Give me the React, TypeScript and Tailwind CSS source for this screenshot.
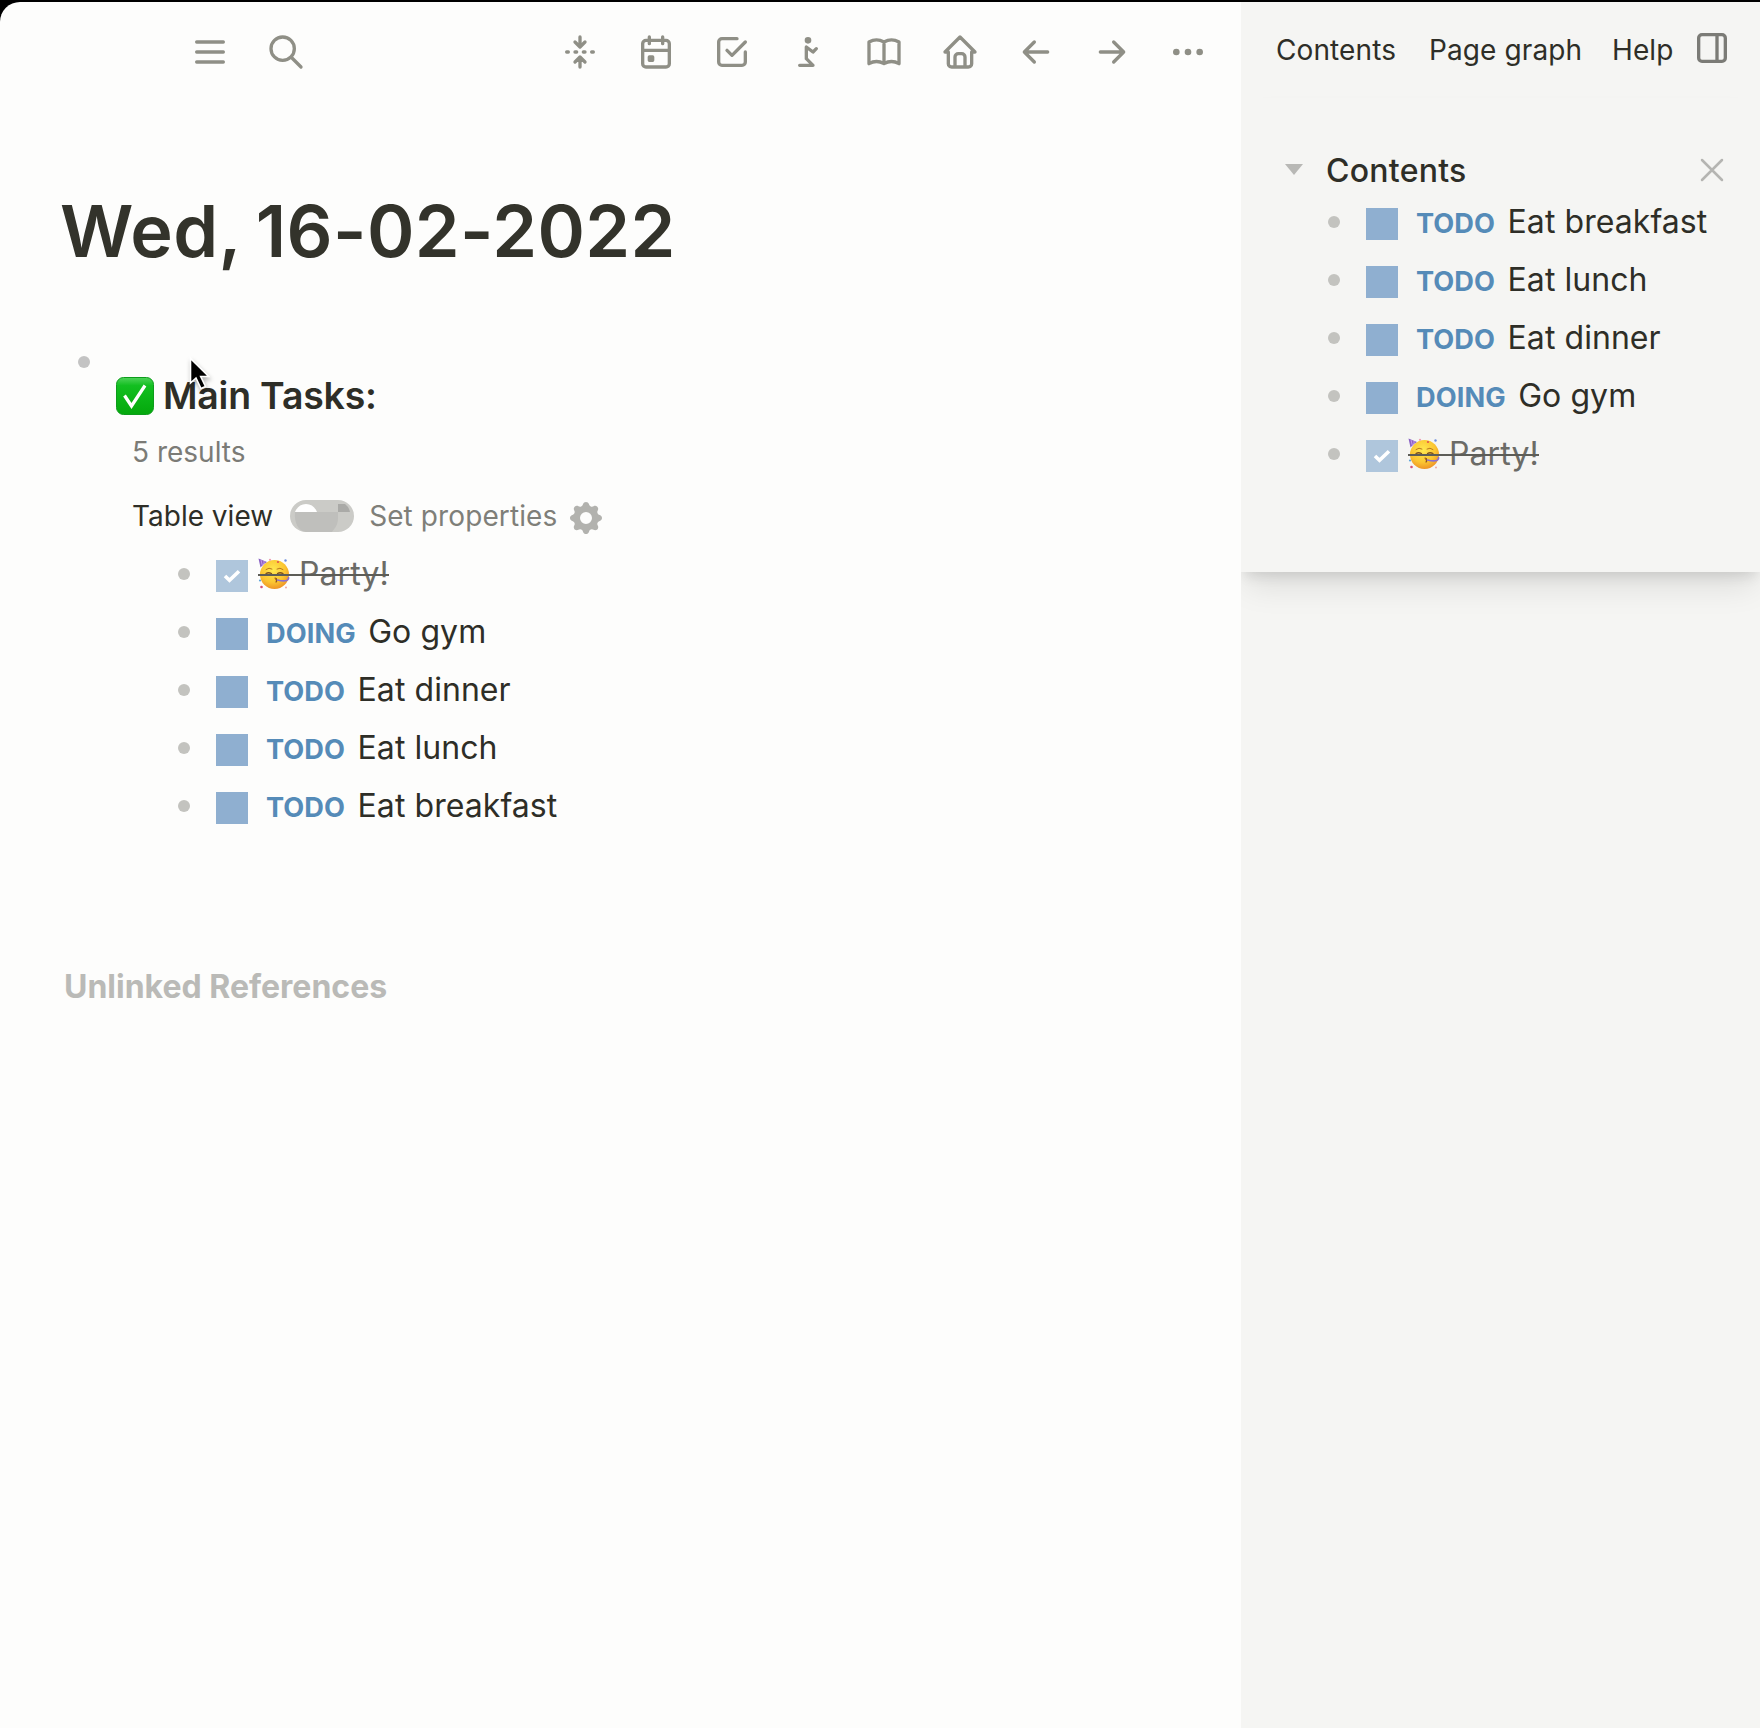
import type { ReactNode } from "react";

function Icon({ children, className = "" }: { children: ReactNode; className?: string }) {
  return (
    <svg viewBox="0 0 24 24" fill="none" stroke="currentColor" strokeWidth="2" strokeLinecap="round" strokeLinejoin="round" className={`size-10 shrink-0 ${className}`}>
      {children}
    </svg>
  );
}

const toolbar: string[] = [
  "M12 3v6l3-3M9 6l3 3M12 21v-6l3 3M9 18l3-3M4 12h1M9 12h1M14 12h1M19 12h1",
  "M6 5h12a2 2 0 0 1 2 2v12a2 2 0 0 1-2 2H6a2 2 0 0 1-2-2V7a2 2 0 0 1 2-2zM16 3v4M8 3v4M4 11h16M8 15h2v2H8z",
  "M9 11l3 3l8-8M20 12v6a2 2 0 0 1-2 2H6a2 2 0 0 1-2-2V6a2 2 0 0 1 2-2h9",
  "M11 5a1 1 0 1 0 2 0a1 1 0 1 0-2 0M7 20h8l-4-4V9l4 3l2-2",
  "M3 19a9 9 0 0 1 9 0a9 9 0 0 1 9 0M3 6a9 9 0 0 1 9 0a9 9 0 0 1 9 0M3 6v13M12 6v13M21 6v13",
  "M5 12H3l9-9l9 9h-2M5 12v7a2 2 0 0 0 2 2h10a2 2 0 0 0 2-2v-7M9 21v-6a2 2 0 0 1 2-2h2a2 2 0 0 1 2 2v6",
  "M5 12h14M5 12l6 6M5 12l6-6",
  "M5 12h14M13 18l6-6M13 6l6 6",
  "M4 12a1 1 0 1 0 2 0a1 1 0 1 0-2 0M11 12a1 1 0 1 0 2 0a1 1 0 1 0-2 0M18 12a1 1 0 1 0 2 0a1 1 0 1 0-2 0",
];

function PartyFace() {
  return (
    <svg viewBox="0 0 32 32" className="size-8 shrink-0">
      <defs>
        <radialGradient id="face" cx="0.45" cy="0.35" r="0.65">
          <stop offset="0" stopColor="#ffe950" />
          <stop offset="0.65" stopColor="#fbc531" />
          <stop offset="1" stopColor="#ee9526" />
        </radialGradient>
      </defs>
      <circle cx="16.500" cy="16.500" r="14.500" fill="url(#face)" />
      <path d="M0.500 0.500L9 4Q5 6 2.500 9.500z" fill="#8a62c4" />
      <path d="M3 2l1.500 6M6 3v3" stroke="#c69bea" strokeWidth="1" />
      <path d="M8 11.500q3-2.500 6-0.500M19 11q3-2 6 0.500" stroke="#b8761f" strokeWidth="1" fill="none" strokeLinecap="round" />
      <path d="M8 15.500q2.500-1.500 5.500 0M19.500 15.500q2.500-1.500 5.500 0" stroke="#7a4f1e" strokeWidth="1.300" fill="none" strokeLinecap="round" />
      <path d="M17 20q2.500 0.500 1 1.800q1.500 1 0 2.200" stroke="#8a4a18" strokeWidth="1.200" fill="none" strokeLinecap="round" />
      <path d="M19.500 22q6 1.500 9 0.500q2.500-1 2-3" stroke="#8b70cf" strokeWidth="1.600" fill="none" strokeLinecap="round" />
      <circle cx="12" cy="1.800" r="1.100" fill="#ef9ab0" />
      <circle cx="20" cy="4" r="1.100" fill="#e0524e" />
      <circle cx="27.500" cy="2.500" r="1.200" fill="#6e8fe0" />
      <circle cx="2" cy="22.500" r="1.100" fill="#5ea4dc" />
      <circle cx="3.500" cy="29" r="1.300" fill="#d44f77" />
      <circle cx="28" cy="29.500" r="1" fill="#f0a8a0" />
    </svg>
  );
}

type Task = { state: "TODO" | "DOING" | "DONE"; text: string };

function TaskRow({ state, text }: Task) {
  return (
    <li className="flex h-[58px] items-center">
      <span className="size-3 shrink-0 rounded-full bg-[#c3c3bf]" />
      {state === "DONE" ? (
        <>
          <span className="mt-1 ml-[26px] flex size-8 shrink-0 items-center justify-center bg-[#afc6dc]">
            <svg viewBox="0 0 32 32" className="size-8" fill="none" stroke="#fff" strokeWidth="3.600">
              <path d="M9 16l4.500 4.300L23 11.200" />
            </svg>
          </span>
          <span className="relative ml-[10px] flex items-center text-[32px] leading-[58px] tracking-[0.1px] text-[#6b6b66]">
            <PartyFace />
            <span className="ml-[9px] whitespace-pre">{text}</span>
            <span className="absolute inset-x-0 top-[29px] h-[2px] bg-[#5d5d57]" />
          </span>
        </>
      ) : (
        <>
          <span className="mt-1 ml-[26px] size-8 shrink-0 bg-[#8fafd0]" />
          <span className="mt-[2px] ml-[18px] text-[32px] leading-[58px] tracking-[0.06px] whitespace-nowrap text-[#2e2e27]">
            <span className="mr-[12.5px] text-[27.2px] font-bold text-[#558bb8]">{state}</span>
            {text}
          </span>
        </>
      )}
    </li>
  );
}

const tasks: Task[] = [
  { state: "TODO", text: "Eat breakfast" },
  { state: "TODO", text: "Eat lunch" },
  { state: "TODO", text: "Eat dinner" },
  { state: "DOING", text: "Go gym" },
  { state: "DONE", text: "Party!" },
];

export default function App() {
  return (
    <div className="relative h-[1728px] w-[1760px] overflow-hidden bg-black pt-[2px] font-['Inter',sans-serif] text-[#2e2e27]">
      <div className="flex h-[1726px] overflow-hidden rounded-tl-[20px] bg-[#fdfdfc]">
        <main className="w-[1241px] shrink-0">
          <header className="flex h-[100px] items-center pr-[33px] pl-[190px] text-[#8f8f86]">
            <Icon><path d="M4 6h16M4 12h16M4 18h16" /></Icon>
            <Icon className="ml-9"><path d="M3 10a7 7 0 1 0 14 0a7 7 0 1 0-14 0M21 21l-6-6" /></Icon>
            <nav className="ml-auto flex gap-9">
              {toolbar.map((d) => (
                <Icon key={d}><path d={d} /></Icon>
              ))}
            </nav>
          </header>

          <h1 className="mt-[84px] ml-[60px] h-[90px] text-[72px] leading-[90px] font-semibold tracking-[0.4px] whitespace-nowrap text-[#33332b] [word-spacing:-3.2px]">
            Wed, 16-02-2022
          </h1>

          <section className="mt-[80px] pl-[78px]">
            <span className="block size-3 rounded-full bg-[#c3c3c3]" />
            <h2 className="mt-[3px] ml-[38px] flex h-[50px] items-center text-[37.440px] leading-[50px] font-semibold tracking-[-0.2px]">
              <svg viewBox="0 0 38 38" className="mr-[9px] size-[38px]">
                <defs>
                  <linearGradient id="tick" x2="0" y2="1">
                    <stop offset="0" stopColor="#4fd35a" />
                    <stop offset="0.22" stopColor="#12bf20" />
                    <stop offset="1" stopColor="#04a80c" />
                  </linearGradient>
                </defs>
                <rect x="0.500" y="0.500" width="37" height="37" rx="7" fill="url(#tick)" stroke="#0d9c1b" />
                <path d="M8.500 18.500l7 10.500L29 8.500" fill="none" stroke="#fff" strokeWidth="3.200" />
              </svg>
              Main Tasks:
            </h2>
            <p className="mt-[9px] ml-[54px] h-[44px] text-[28px] leading-[44px] text-[#7b7b76]">5 results</p>
            <div className="mt-[18px] ml-[54px] flex h-[48px] items-center text-[28px]">
              <span className="whitespace-nowrap">Table view</span>
              <svg viewBox="0 0 64 32" className="ml-[17px] h-8 w-16 shrink-0">
                <rect width="64" height="32" rx="16" fill="#cbcbc7" />
                <path d="M5 12h43v6c0 7-3 10-6 14H16C9 31 4 24 5 12z" fill="#bfbfbc" />
                <path d="M5 12C7 7 11 4 16 4s9 3 11 8z" fill="#fff" />
                <path d="M48 4h7q4 3 5 8H48z" fill="#aaaaa7" />
              </svg>
              <span className="ml-[15px] tracking-[0.1px] whitespace-nowrap text-[#7f7f79]">Set properties</span>
              <svg viewBox="0 0 20 20" className="mt-1 ml-[9px] size-10 shrink-0 text-[#b2b2ae]" fill="currentColor">
                <path fillRule="evenodd" clipRule="evenodd" d="M11.490 3.170c-.38-1.560-2.600-1.560-2.980 0a1.532 1.532 0 01-2.286.948c-1.372-.836-2.942.734-2.106 2.106.54.886.061 2.042-.947 2.287-1.561.379-1.561 2.600 0 2.978a1.532 1.532 0 01.947 2.287c-.836 1.372.734 2.942 2.106 2.106a1.532 1.532 0 012.287.947c.379 1.561 2.600 1.561 2.978 0a1.533 1.533 0 012.287-.947c1.372.836 2.942-.734 2.106-2.106a1.533 1.533 0 01.947-2.287c1.561-.379 1.561-2.600 0-2.978a1.532 1.532 0 01-.947-2.287c.836-1.372-.734-2.942-2.106-2.106a1.532 1.532 0 01-2.287-.947zM10 13a3 3 0 100-6 3 3 0 000 6z" />
              </svg>
            </div>
            <ul className="mt-[5px] ml-[100px]">
              {[...tasks].reverse().map((t) => (
                <TaskRow key={t.text} {...t} />
              ))}
            </ul>
          </section>

          <h2 className="mt-[128px] ml-[64px] text-[32px] leading-[48px] font-bold text-[#babab7]">Unlinked References</h2>
        </main>

        <aside className="w-[519px] shrink-0 overflow-hidden bg-[#f5f5f3]">
          <header className="flex h-[96px] items-center pl-[35px] text-[28px] tracking-[0.1px] whitespace-nowrap">
            <span className="w-[153px]">Contents</span>
            <span className="w-[183px]">Page graph</span>
            <span className="w-[80px]">Help</span>
            <Icon className="-mt-1 text-[#7b7b76]">
              <path d="M6 4h12a2 2 0 0 1 2 2v12a2 2 0 0 1-2 2H6a2 2 0 0 1-2-2V6a2 2 0 0 1 2-2zM15 4v16" />
            </Icon>
          </header>
          <section className="h-[474px] pt-[44px] shadow-[0_20px_30px_-6px_rgba(0,0,0,0.1),0_8px_12px_-4px_rgba(0,0,0,0.1)]">
            <div className="flex h-[56px] items-center pl-[44px]">
              <svg viewBox="0 0 18 11" className="-mt-px h-[11px] w-[18px] fill-[#b8b8b5]"><path d="M0 0h18L9 11z" /></svg>
              <h3 className="mt-[2px] ml-[23px] text-[32px] font-medium tracking-[0.25px]">Contents</h3>
              <svg viewBox="0 0 24 24" className="mr-[36px] ml-auto size-6" fill="none" stroke="#b5b5b2" strokeWidth="2.500" strokeLinecap="round">
                <path d="M2 2l20 20M22 2L2 22" />
              </svg>
            </div>
            <ul className="-mt-[5px] pl-[87px]">
              {tasks.map((t) => (
                <TaskRow key={t.text} {...t} />
              ))}
            </ul>
          </section>
        </aside>
      </div>

      <svg viewBox="0 0 24 36" className="absolute top-[356px] left-[188px] h-9 w-6 drop-shadow-[1px_3px_2px_rgba(0,0,0,0.3)]">
        <path d="M2.500 2.500v24.500l5.500-5l5 10.500l4.500-2l-4.800-10h8z" fill="#000" stroke="#fff" strokeWidth="1.600" />
      </svg>
    </div>
  );
}
